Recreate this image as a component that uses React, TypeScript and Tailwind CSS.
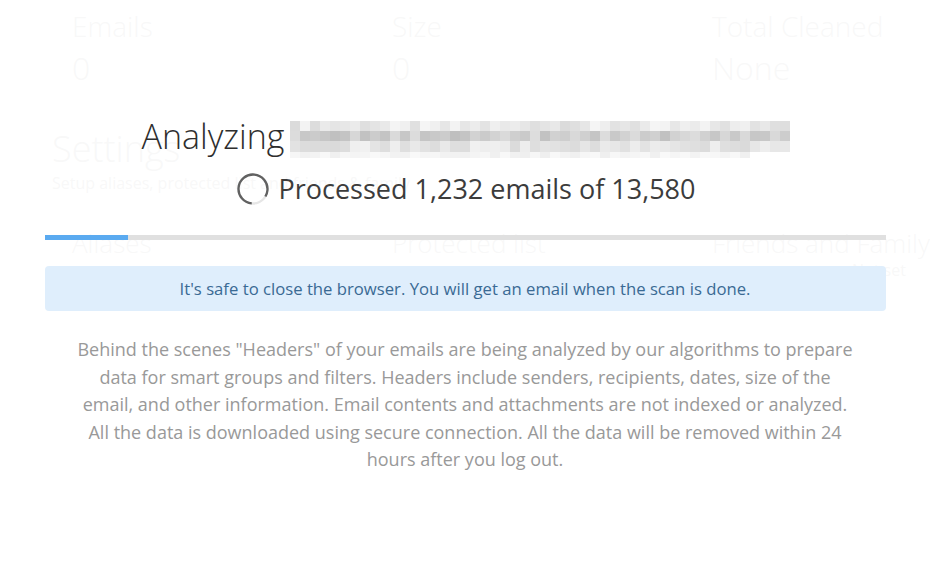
import React from "react";

const shade = (row: number, col: number) => {
  const n = Math.sin(row * 91.7 + col * 12.9898) * 43758.5453;
  return n - Math.floor(n);
};

const rows = [
  { h: 10, base: 232, spread: 26, cols: 50 },
  { h: 10, base: 206, spread: 30, cols: 50 },
  { h: 11, base: 230, spread: 24, cols: 50 },
  { h: 6, base: 244, spread: 10, cols: 46 },
];

const BlurredEmail = () => (
  <div className="flex w-[500px] flex-col">
    {rows.map((r, ri) => (
      <div key={ri} className="flex">
        {Array.from({ length: r.cols }).map((_, ci) => {
          const v = Math.round(r.base + (shade(ri, ci) - 0.5) * r.spread);
          const c = Math.min(250, Math.max(190, v));
          return (
            <div
              key={ci}
              className="w-[10px]"
              style={{ height: r.h, backgroundColor: `rgb(${c},${c},${c})` }}
            />
          );
        })}
      </div>
    ))}
  </div>
);

const Spinner = () => (
  <svg width="32" height="32" viewBox="0 0 32 32" className="shrink-0">
    <circle cx="16" cy="16" r="14.5" fill="none" stroke="#e6e6e6" strokeWidth="2.3" />
    <circle
      cx="16"
      cy="16"
      r="14.5"
      fill="none"
      stroke="#616161"
      strokeWidth="2.3"
      strokeDasharray="74.5 91.1"
      transform="rotate(95 16 16)"
    />
  </svg>
);

const App = () => {
  return (
    <div className="relative h-[587px] w-[930px] overflow-hidden bg-white font-['Open_Sans','Liberation_Sans',sans-serif]">
      {/* page behind the modal */}
      <div className="text-[#b4b4b4]">
        <div className="grid grid-cols-[320px_320px_320px] pl-[72px] pt-[8px]">
          <div>
            <div className="text-[28px] font-light leading-[36px]">Emails</div>
            <div className="text-[32px] font-light leading-[48px]">0</div>
          </div>
          <div>
            <div className="text-[28px] font-light leading-[36px]">Size</div>
            <div className="text-[32px] font-light leading-[48px]">0</div>
          </div>
          <div>
            <div className="text-[28px] font-light leading-[36px]">Total Cleaned</div>
            <div className="text-[32px] font-light leading-[48px]">None</div>
          </div>
        </div>
        <div className="pl-[52px] pt-[35px]">
          <div className="text-[36px] font-light leading-[44px]">Settings</div>
          <div className="text-[16px] leading-[24px]">Setup aliases, protected list and friends &amp; family</div>
        </div>
        <div className="mt-[33px] grid grid-cols-[320px_320px_320px] pl-[72px]">
          <div className="text-[26px] font-light leading-[30px]">Aliases</div>
          <div className="text-[26px] font-light leading-[30px]">Protected list</div>
          <div className="text-[26px] font-light leading-[30px]">Friends and Family</div>
        </div>
        <div className="grid grid-cols-[320px_320px_320px] pl-[72px] text-[16px] leading-[24px]">
          <div />
          <div />
          <div className="pl-[140px]">Not set</div>
        </div>
      </div>

      {/* modal overlay */}
      <div className="absolute inset-0 bg-white/90">
        <div className="mx-auto w-[841px] pt-[114px]">
          <div className="flex items-start justify-center gap-[6px] pl-[2px]">
            <span className="text-[34px] font-light leading-[44px] text-[#2e2e2e]">Analyzing</span>
            <div className="mt-[7px]">
              <BlurredEmail />
            </div>
          </div>

          <div className="mt-[12px] flex items-center justify-center gap-[10px] pl-[2px]">
            <Spinner />
            <span className="text-[27px] leading-[38px] text-[#3c3c3c]">Processed 1,232 emails of 13,580</span>
          </div>

          <div className="mt-[27px] flex h-[5px] bg-[#e0e0e0]">
            <div className="w-[83px] bg-[#5aaaf0]" />
          </div>

          <div className="mt-[26px] flex h-[45px] items-center justify-center rounded-[4px] bg-[#dfeefc] text-[16.7px] text-[#3a6a94]">
            It's safe to close the browser. You will get an email when the scan is done.
          </div>

          <p className="mt-[25px] text-center text-[18px] leading-[27.5px] text-[#999999]">
            Behind the scenes "Headers" of your emails are being analyzed by our algorithms to prepare
            <br />
            data for smart groups and filters. Headers include senders, recipients, dates, size of the
            <br />
            email, and other information. Email contents and attachments are not indexed or analyzed.
            <br />
            All the data is downloaded using secure connection. All the data will be removed within 24
            <br />
            hours after you log out.
          </p>
        </div>
      </div>
    </div>
  );
};

export default App;
